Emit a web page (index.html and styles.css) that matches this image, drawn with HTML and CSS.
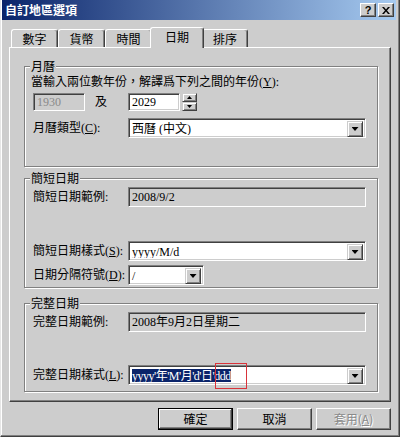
FILE: index.html
```html
<!DOCTYPE html>
<html lang="zh-Hant">
<head>
<meta charset="UTF-8">
<meta name="viewport" content="width=device-width, initial-scale=1.0">
<title>自訂地區選項</title>
<link rel="stylesheet" href="styles.css">
</head>
<body>
<div class="window">
  <div class="titlebar">
    <span class="title">自訂地區選項</span>
    <span class="cbtn help">?</span>
    <span class="cbtn close">
      <svg width="8" height="7" viewBox="0 0 8 7"><path d="M0 0h2l2 2.4L6 0h2L5 3.5 8 7H6L4 4.6 2 7H0l3-3.5z"/></svg>
    </span>
  </div>

  <div class="client">
    <!-- tabs -->
    <div class="tabs">
      <div class="tab">數字</div>
      <div class="tab">貨幣</div>
      <div class="tab">時間</div>
      <div class="tab active">日期</div>
      <div class="tab">排序</div>
    </div>

    <div class="panel">
      <!-- 月曆 -->
      <div class="group g-cal">
        <div class="group-title">月曆</div>
        <div class="note">當輸入兩位數年份，解譯爲下列之間的年份(<u>Y</u>):</div>
        <div class="row years">
          <div class="field disabled year">1930</div>
          <span class="and">及</span>
          <div class="field year">2029</div>
          <div class="spin">
            <span class="sbtn"><i class="arrow up"></i></span>
            <span class="sbtn"><i class="arrow"></i></span>
          </div>
        </div>
        <div class="row cal-type">
          <span class="lbl">月曆類型(<u>C</u>):</span>
          <div class="combo wide"><span class="val">西曆 (中文)</span><span class="drop"><i class="arrow"></i></span></div>
        </div>
      </div>

      <!-- 簡短日期 -->
      <div class="group g-short">
        <div class="group-title">簡短日期</div>
        <div class="row sample">
          <span class="lbl">簡短日期範例:</span>
          <div class="field readonly wide">2008/9/2</div>
        </div>
        <div class="row style">
          <span class="lbl">簡短日期樣式(<u>S</u>):</span>
          <div class="combo wide"><span class="val">yyyy/M/d</span><span class="drop"><i class="arrow"></i></span></div>
        </div>
        <div class="row sep">
          <span class="lbl">日期分隔符號(<u>D</u>):</span>
          <div class="combo narrow"><span class="val">/</span><span class="drop"><i class="arrow"></i></span></div>
        </div>
      </div>

      <!-- 完整日期 -->
      <div class="group g-long">
        <div class="group-title">完整日期</div>
        <div class="row sample">
          <span class="lbl">完整日期範例:</span>
          <div class="field readonly wide">2008年9月2日星期二</div>
        </div>
        <div class="row style">
          <span class="lbl">完整日期樣式(<u>L</u>):</span>
          <div class="combo wide marked">
            <span class="val"><span class="sel">yyyy'年'M'月'd'日'ddd</span></span>
            <span class="drop"><i class="arrow"></i></span>
            <span class="annot"></span>
          </div>
        </div>
      </div>
    </div>

    <div class="buttons">
      <div class="btn default">確定</div>
      <div class="btn">取消</div>
      <div class="btn disabled">套用(<u>A</u>)</div>
    </div>
  </div>
</div>
</body>
</html>
```

FILE: styles.css
```css
body {
  margin: 0;
  background: #fff;
  font-family: "Liberation Serif", "Noto Sans CJK TC", serif;
  font-size: 12px;
  line-height: 14px;
  color: #000;
}

.window {
  width: 400px;
  height: 437px;
  box-sizing: border-box;
  background: #cdcdcd;
  border-left: 1px solid #e6e6e6;
  border-right: 1px solid #404040;
  border-bottom: 1px solid #404040;
  box-shadow: inset -1px -1px #808080, inset 1px 0 #fff;
  padding: 0 3px 0 1px;
}

.titlebar {
  height: 20px;
  display: flex;
  align-items: center;
  padding: 0 2px 0 3px;
  background: linear-gradient(90deg, #0a246a, #a6caf0);
}

.title {
  flex: 1;
  color: #fff;
  font-family: "Noto Sans CJK TC", sans-serif;
  font-weight: bold;
  font-size: 12px;
}

.cbtn {
  width: 16px;
  height: 14px;
  box-sizing: border-box;
  display: flex;
  align-items: center;
  justify-content: center;
  background: #cdcdcd;
  border: 1px solid;
  border-color: #fff #404040 #404040 #fff;
  box-shadow: inset -1px -1px #808080;
  font-family: "Liberation Sans", sans-serif;
  font-weight: bold;
  font-size: 11px;
  line-height: 12px;
}

.close {
  margin-left: 2px;
}

.client {
  padding: 7px 5px 0 7px;
}

/* tabs */
.tabs {
  display: flex;
  align-items: flex-end;
  height: 20px;
  padding-left: 2px;
}

.tab {
  width: 47px;
  height: 18px;
  box-sizing: border-box;
  border: 1px solid;
  border-color: #fff #404040 transparent #fff;
  border-bottom: none;
  border-radius: 3px 3px 0 0;
  box-shadow: inset -1px 0 #808080;
  text-align: center;
  line-height: 17px;
  font-family: "Noto Sans CJK TC", sans-serif;
}

.tab.active {
  position: relative;
  z-index: 1;
  width: 54px;
  height: 21px;
  margin: 0 -2px -1px;
  background: #cdcdcd;
  line-height: 18px;
}

.tab.active + .tab {
  width: 46px;
}

.panel {
  height: 355px;
  box-sizing: border-box;
  border: 1px solid;
  border-color: #fff #404040 #404040 #fff;
  box-shadow: inset -1px -1px #808080;
  padding-top: 18px;
}

/* group boxes */
.group {
  width: 354px;
  margin-left: 14px;
  box-sizing: border-box;
  border: 1px solid #808080;
  box-shadow: inset 1px 1px #fff, 1px 1px #fff;
  padding-left: 8px;
}

.group-title {
  width: max-content;
  margin: -8px 0 0 -3px;
  padding: 0 1px;
  background: #cdcdcd;
  font-family: "Noto Sans CJK TC", sans-serif;
}

.g-cal {
  padding-bottom: 28px;
}

.g-short {
  margin-top: 11px;
  padding-bottom: 2px;
}

.g-long {
  margin-top: 15px;
  padding-bottom: 6px;
}

.note {
  margin: 2px 0 0 -2px;
}

.row {
  display: flex;
  align-items: center;
}

.years {
  margin-top: 4px;
}

.cal-type {
  margin-top: 7px;
}

.sample {
  margin-top: 2px;
}

.g-short .style {
  margin-top: 34px;
}

.g-long .style {
  margin-top: 33px;
}

.sep {
  margin-top: 4px;
}

.lbl {
  width: 95px;
  flex: none;
}

.and {
  width: 33px;
  margin-left: 10px;
}

/* edit fields */
.field,
.combo {
  box-sizing: border-box;
  height: 20px;
  border: 1px solid;
  border-color: #808080 #fff #fff #808080;
  box-shadow: inset 1px 1px #404040, inset -1px -1px #cdcdcd;
  background: #fff;
  padding: 2px 3px 0 3px;
}

.field.year {
  width: 52px;
  height: 18px;
  padding-top: 1px;
}

.field.disabled {
  background: #cdcdcd;
  color: #8a8a8a;
}

.field.readonly {
  background: #cdcdcd;
}

.wide {
  width: 238px;
}

.narrow {
  width: 76px;
}

.spin {
  margin-left: 2px;
  display: flex;
  flex-direction: column;
}

.sbtn,
.drop {
  box-sizing: border-box;
  display: flex;
  align-items: center;
  justify-content: center;
  background: #cdcdcd;
  border: 1px solid;
  border-color: #cdcdcd #404040 #404040 #cdcdcd;
  box-shadow: inset 1px 1px #fff, inset -1px -1px #808080;
}

.sbtn {
  width: 15px;
  height: 9px;
}

.arrow {
  display: block;
  width: 7px;
  height: 4px;
  background: #000;
  clip-path: polygon(0 0, 100% 0, 50% 100%);
}

.sbtn .arrow {
  width: 5px;
  height: 3px;
}

.sbtn .arrow.up {
  clip-path: polygon(50% 0, 100% 100%, 0 100%);
}

.combo {
  display: flex;
  padding: 2px;
}

.combo .val {
  flex: 1;
  padding-left: 1px;
  line-height: 16px;
  white-space: nowrap;
  overflow: hidden;
}

.drop {
  width: 16px;
  height: 16px;
}

.marked {
  position: relative;
}

.sel {
  background: #0a246a;
  color: #fff;
  letter-spacing: -0.5px;
}

/* red annotation box drawn over the combo */
.annot {
  position: absolute;
  left: 86px;
  top: -3px;
  width: 30px;
  height: 24px;
  border: 1px solid #d8333a;
}

/* dialog buttons */
.buttons {
  display: flex;
  justify-content: flex-end;
  gap: 4px;
  margin-top: 6px;
}

.btn {
  width: 75px;
  height: 22px;
  box-sizing: border-box;
  display: flex;
  align-items: center;
  justify-content: center;
  border: 1px solid;
  border-color: #fff #404040 #404040 #fff;
  box-shadow: inset -1px -1px #808080;
  font-family: "Noto Sans CJK TC", sans-serif;
}

.btn.default {
  border-color: #000;
  box-shadow: inset -1px -1px #404040, inset 1px 1px #fff, inset -2px -2px #808080;
}

.btn.disabled {
  color: #8a8a8a;
  text-shadow: 1px 1px #fff;
}
```
